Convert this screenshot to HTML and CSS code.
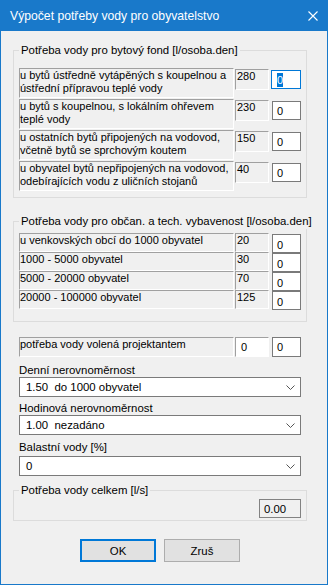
FILE: index.html
```html
<!DOCTYPE html>
<html lang="cs">
<head>
<meta charset="utf-8">
<title>Výpočet potřeby vody pro obyvatelstvo</title>
<link rel="stylesheet" href="styles.css">
</head>
<body>
<div class="window">
  <div class="titlebar">
    <span class="title">Výpočet potřeby vody pro obyvatelstvo</span>
    <svg class="close" width="10" height="10" viewBox="0 0 10 10"><path d="M0.5 0.5L9.5 9.5M9.5 0.5L0.5 9.5" stroke="#fff" stroke-width="1.1" fill="none"/></svg>
  </div>
  <div class="client">
    <fieldset class="group g1">
      <legend>Potřeba vody pro bytový fond [l/osoba.den]</legend>
      <div class="row tall">
        <div class="cell label">u bytů ústředně vytápěných s koupelnou a<br>ústřední přípravou teplé vody</div>
        <div class="cell value">280</div>
        <div class="edit focus"><span class="sel">0</span></div>
      </div>
      <div class="row tall">
        <div class="cell label">u bytů s koupelnou, s lokálním ohřevem<br>teplé vody</div>
        <div class="cell value">230</div>
        <div class="edit">0</div>
      </div>
      <div class="row tall">
        <div class="cell label">u ostatních bytů připojených na vodovod,<br>včetně bytů se sprchovým koutem</div>
        <div class="cell value">150</div>
        <div class="edit">0</div>
      </div>
      <div class="row tall">
        <div class="cell label">u obyvatel bytů nepřipojených na vodovod,<br>odebírajících vodu z uličních stojanů</div>
        <div class="cell value">40</div>
        <div class="edit">0</div>
      </div>
    </fieldset>

    <fieldset class="group g2">
      <legend>Potřeba vody pro občan. a tech. vybavenost [l/osoba.den]</legend>
      <div class="row short">
        <div class="cell label">u venkovských obcí do 1000 obyvatel</div>
        <div class="cell value">20</div>
        <div class="edit">0</div>
      </div>
      <div class="row short">
        <div class="cell label">1000 - 5000 obyvatel</div>
        <div class="cell value">30</div>
        <div class="edit">0</div>
      </div>
      <div class="row short">
        <div class="cell label">5000 - 20000 obyvatel</div>
        <div class="cell value">70</div>
        <div class="edit">0</div>
      </div>
      <div class="row short">
        <div class="cell label">20000 - 100000 obyvatel</div>
        <div class="cell value">125</div>
        <div class="edit">0</div>
      </div>
    </fieldset>

    <div class="row proj">
      <div class="cell label">potřeba vody volená projektantem</div>
      <div class="cell value white">0</div>
      <div class="edit">0</div>
    </div>

    <div class="field-label first">Denní nerovnoměrnost</div>
    <div class="combo">
      <span>1.50&nbsp; do 1000 obyvatel</span>
      <svg class="chev" width="9" height="5" viewBox="0 0 9 5"><path d="M0.5 0.5L4.5 4.5L8.5 0.5" stroke="#555" stroke-width="1" fill="none"/></svg>
    </div>
    <div class="field-label">Hodinová nerovnoměrnost</div>
    <div class="combo">
      <span>1.00&nbsp; nezadáno</span>
      <svg class="chev" width="9" height="5" viewBox="0 0 9 5"><path d="M0.5 0.5L4.5 4.5L8.5 0.5" stroke="#555" stroke-width="1" fill="none"/></svg>
    </div>
    <div class="field-label third">Balastní vody [%]</div>
    <div class="combo last">
      <span>0</span>
      <svg class="chev" width="9" height="5" viewBox="0 0 9 5"><path d="M0.5 0.5L4.5 4.5L8.5 0.5" stroke="#555" stroke-width="1" fill="none"/></svg>
    </div>

    <fieldset class="group g3">
      <legend>Potřeba vody celkem [l/s]</legend>
      <div class="total-row">
        <div class="output">0.00</div>
      </div>
    </fieldset>

    <div class="buttons">
      <div class="btn default">OK</div>
      <div class="btn">Zruš</div>
    </div>
  </div>
</div>
</body>
</html>
```

FILE: styles.css
```css
* { box-sizing: border-box; }
html, body { margin: 0; padding: 0; }
body {
  width: 328px;
  height: 585px;
  overflow: hidden;
  background: #f0f0f0;
  font-family: "Liberation Sans", Arial, sans-serif;
  font-size: 11.4px;
  color: #000;
}
.window {
  width: 328px;
  height: 585px;
  border: 1px solid #1979ca;
  background: #f0f0f0;
  display: flex;
  flex-direction: column;
}
.titlebar {
  flex: none;
  height: 30px;
  background: #1979ca;
  color: #fff;
  display: flex;
  align-items: center;
  justify-content: space-between;
  padding: 0 9px 0 9px;
  font-size: 12.2px;
}
.title { white-space: nowrap; }
.close { display: block; }
.client {
  flex: 1;
  padding: 0 20px 0 12px;
  display: flex;
  flex-direction: column;
}
.group {
  margin: 0;
  border: 1px solid #dcdcdc;
  padding: 0 5px;
  min-width: 0;
}
.group legend {
  padding: 0 2px;
  margin: 0;
  line-height: 16px;
  white-space: nowrap;
}
.g1 { margin-top: 11px; padding-top: 10px; padding-bottom: 6px; }
.g2 { margin-top: 15px; padding-top: 4px; padding-bottom: 12px; }
.g3 { margin-top: 6px; padding-top: 1px; padding-bottom: 2px; }

.row { display: flex; align-items: flex-start; }
.cell {
  border-style: solid;
  border-width: 1px;
  border-color: #a0a0a0 #ffffff #ffffff #a0a0a0;
  line-height: 13px;
  white-space: nowrap;
  overflow: hidden;
  font-size: 11px;
}
.label { width: 215px; padding-left: 0; }
.value { width: 34px; margin-left: 1px; padding-left: 1px; }
.value.white { background: #fff; }
.edit {
  width: 29px;
  margin-left: 3px;
  background: #fff;
  border: 1px solid #7a7a7a;
  padding-left: 4px;
  display: flex;
  align-items: center;
  font-size: 11px;
}
.edit.focus { border-color: #0078d7; width: 30px; margin-left: 2px; padding-left: 5px; }
.sel {
  background: #0078d7;
  color: #fff;
  line-height: 14px;
  display: inline-block;
}

.tall { height: 30px; margin-bottom: 1px; }
.tall:last-child { margin-bottom: 0; }
.tall .label { height: 30px; }
.tall .value { height: 21px; margin-top: 1px; }
.tall .edit { height: 19px; margin-top: 2px; }

.short { height: 19px; }
.short .label { height: 19px; }
.short .value { height: 19px; }
.short .edit { height: 19px; margin-top: 1px; padding-top: 2px; }

.proj { height: 20px; margin: 15px 6px 0 6px; }
.proj .label { height: 20px; }
.proj .value { height: 20px; padding-left: 5px; display: flex; align-items: center; }
.proj .edit { height: 20px; margin-left: 3px; }

.field-label {
  margin: 4px 6px 0 6px;
  line-height: 14px;
  white-space: nowrap;
}
.field-label.first { margin-top: 6px; }
.field-label.third { margin-top: 5px; }
.combo {
  margin: 0 6px 0 6px;
  height: 20px;
  background: #fff;
  border: 1px solid #7a7a7a;
  display: flex;
  align-items: center;
  justify-content: space-between;
  padding: 0 5px 0 6px;
}
.combo.last { margin-top: 2px; }
.chev { display: block; }

.total-row { display: flex; justify-content: flex-end; }
.output {
  width: 42px;
  height: 19px;
  border: 1px solid #828282;
  background: #f0f0f0;
  padding-left: 4px;
  display: flex;
  align-items: center;
}

.buttons {
  display: flex;
  gap: 8px;
  margin-top: 18px;
  padding-left: 67px;
}
.btn {
  width: 76px;
  height: 23px;
  background: #e1e1e1;
  border: 1px solid #adadad;
  display: flex;
  align-items: center;
  justify-content: center;
}
.btn.default { border: 2px solid #0078d7; }
```
